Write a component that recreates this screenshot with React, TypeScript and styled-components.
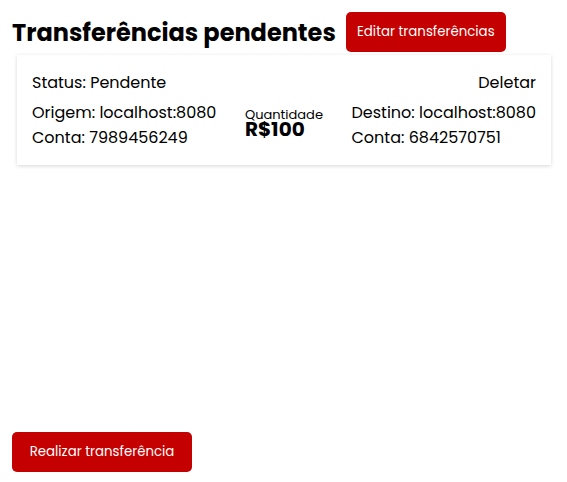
import React from "react";
import styled, { createGlobalStyle } from "styled-components";

const GlobalStyle = createGlobalStyle`
  * {
    box-sizing: border-box;
  }

  body {
    margin: 0;
    background: #ffffff;
    color: #000000;
    font-family: Poppins, Inter, sans-serif;
    font-size: 16px;
    font-weight: 400;
  }

  p, h1 {
    margin: 0;
  }
`;

const Page = styled.main`
  display: flex;
  flex-direction: column;
  min-height: 100vh;
  padding: 12px 12px 10px;
`;

const Header = styled.header`
  display: flex;
  align-items: flex-end;
  gap: 10px;
`;

const Title = styled.h1`
  font-size: 24px;
  font-weight: 700;
  line-height: 38px;
  white-space: nowrap;
`;

const Button = styled.button<{ $width: number }>`
  flex: none;
  width: ${({ $width }) => $width}px;
  height: 40px;
  padding: 0;
  border: none;
  border-radius: 5px;
  background: #c40000;
  color: #ffffff;
  font-family: inherit;
  font-weight: 400;
  white-space: nowrap;
  cursor: pointer;
`;

const TransferList = styled.section`
  flex: 1;
  padding: 3px 4px 0 5px;
`;

const Card = styled.article`
  padding: 15px;
  background: #ffffff;
  box-shadow: 0 1px 4px rgba(0, 0, 0, 0.16);
`;

const Row = styled.div`
  display: flex;
  align-items: center;
  justify-content: space-between;
  line-height: 25px;
  white-space: nowrap;
`;

const Details = styled(Row)`
  margin-top: 5px;
`;

const DeleteButton = styled.button`
  padding: 0;
  border: none;
  background: none;
  color: inherit;
  font: inherit;
  cursor: pointer;
`;

const AmountLabel = styled.p`
  font-size: 13px;
  line-height: 8px;
`;

const Amount = styled.p`
  font-size: 20px;
  font-weight: 700;
  line-height: 20px;
`;

interface Account {
  label: string;
  host: string;
  number: string;
}

const origin: Account = { label: "Origem", host: "localhost:8080", number: "7989456249" };
const destination: Account = { label: "Destino", host: "localhost:8080", number: "6842570751" };

function AccountInfo({ label, host, number }: Account) {
  return (
    <div>
      <p>{label}: {host}</p>
      <p>Conta: {number}</p>
    </div>
  );
}

export default function App() {
  return (
    <>
      <GlobalStyle />
      <Page>
        <Header>
          <Title>Transferências pendentes</Title>
          <Button type="button" $width={160}>Editar transferências</Button>
        </Header>
        <TransferList>
          <Card>
            <Row>
              <p>Status: Pendente</p>
              <DeleteButton type="button">Deletar</DeleteButton>
            </Row>
            <Details>
              <AccountInfo {...origin} />
              <div>
                <AmountLabel>Quantidade</AmountLabel>
                <Amount>R$100</Amount>
              </div>
              <AccountInfo {...destination} />
            </Details>
          </Card>
        </TransferList>
        <Button type="button" $width={180}>Realizar transferência</Button>
      </Page>
    </>
  );
}
